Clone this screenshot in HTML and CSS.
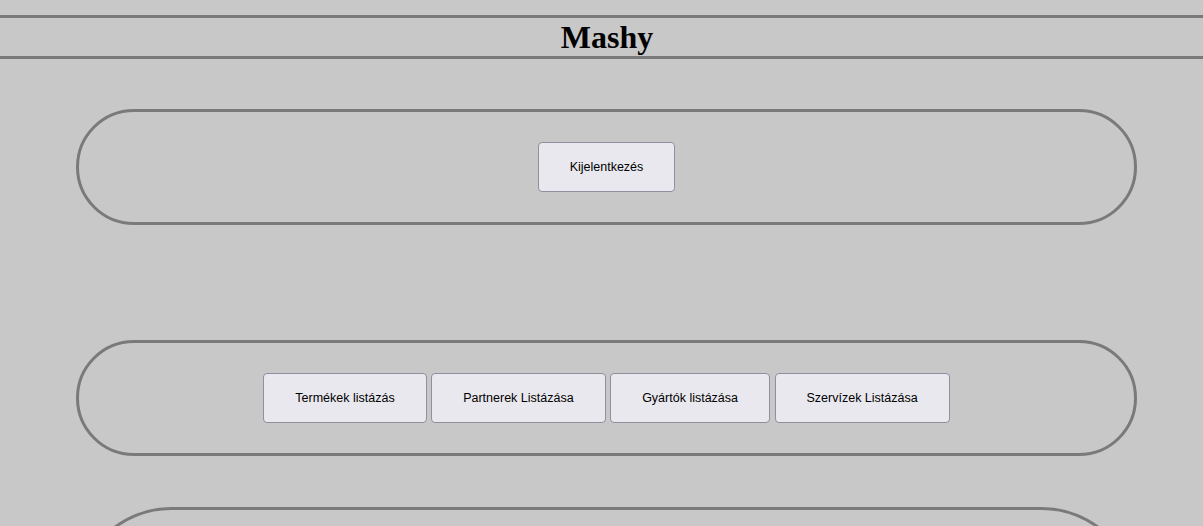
FILE: index.html
```html
<!DOCTYPE html>
<html lang="hu">
<head>
<meta charset="utf-8">
<title>Mashy</title>
<link rel="stylesheet" href="styles.css">
</head>
<body>
<header class="site-header">
  <h1 class="site-title">Mashy</h1>
</header>
<main class="content">
  <section class="panel panel-top">
    <button class="btn" type="button">Kijelentkezés</button>
  </section>
  <section class="panel panel-list">
    <button class="btn" type="button">Termékek listázás</button>
    <button class="btn" type="button">Partnerek Listázása</button>
    <button class="btn" type="button">Gyártók listázása</button>
    <button class="btn" type="button">Szervízek Listázása</button>
  </section>
  <section class="panel panel-big"></section>
</main>
</body>
</html>
```
FILE: styles.css
```css
html, body {
  margin: 0;
  padding: 0;
  background: #c8c8c8;
}

body {
  padding-top: 15px;
  overflow: hidden;
  height: 526px;
  box-sizing: border-box;
}

.site-header {
  border-top: 3px solid #7a7a7a;
  border-bottom: 3px solid #7a7a7a;
}

.site-title {
  margin: 0;
  padding-left: 11px;
  font-family: "Liberation Serif", "Times New Roman", serif;
  font-size: 32px;
  font-weight: bold;
  line-height: 38px;
  height: 38px;
  text-align: center;
  color: #000;
}

.content {
  display: flex;
  flex-direction: column;
}

.panel {
  box-sizing: border-box;
  margin: 0 66px 0 76px;
  border: 3px solid #7a7a7a;
  border-radius: 9999px;
  display: flex;
  align-items: center;
  justify-content: center;
  gap: 4.5px;
  height: 116px;
  flex-shrink: 0;
}

.panel-top {
  margin-top: 50px;
}

.panel-list {
  margin-top: 115px;
}

.panel-big {
  margin-top: 51px;
  height: 190px;
}

.btn {
  box-sizing: border-box;
  height: 50px;
  padding: 0 31px;
  background: #e9e8ee;
  border: 1px solid #8f8f9d;
  border-radius: 4px;
  color: #000;
  font-family: "Liberation Sans", Arial, sans-serif;
  font-size: 12.5px;
  cursor: pointer;
}
```
